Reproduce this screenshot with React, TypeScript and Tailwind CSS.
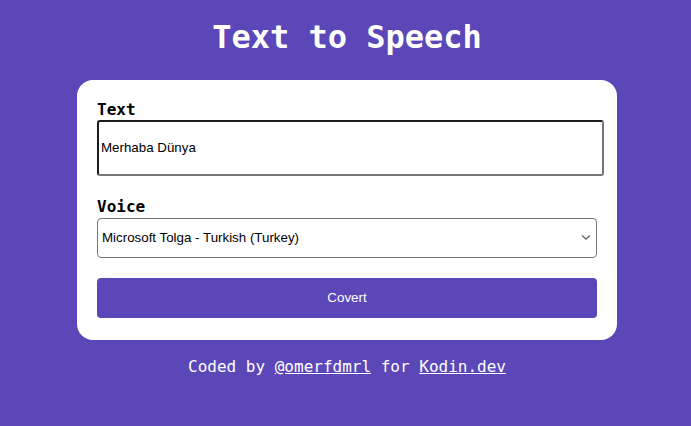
import { useState } from "react";

const mono = "font-['DejaVu_Sans_Mono',monospace]";

const App = () => {
  const [text, setText] = useState("Merhaba Dünya");
  const [voice, setVoice] = useState("tolga");

  return (
    <div className="flex min-h-screen w-full flex-col items-center bg-[#5c47b8] pt-[17px] pl-[3px] text-white">
      <h1 className={`${mono} text-[32px] font-bold leading-[40px]`}>
        Text to Speech
      </h1>

      <div className="mt-[23px] flex w-[540px] flex-col rounded-2xl bg-white px-5 pt-5 pb-[22px] text-black">
        <label className={`${mono} text-base font-bold leading-5`}>Text</label>
        <textarea
          value={text}
          onChange={(e) => setText(e.target.value)}
          className="h-[56px] w-[507px] resize-none rounded-[3px] border-2 border-t-[#1b1b1b] border-l-[#1b1b1b] border-r-[#767676] border-b-[#767676] px-[2px] pt-[18px] font-['Liberation_Sans',Arial,sans-serif] text-[13.33px] leading-[16px] text-black outline-none"
        />

        <label className={`${mono} mt-[21px] text-base font-bold leading-5`}>
          Voice
        </label>
        <div className="relative mt-px">
          <select
            value={voice}
            onChange={(e) => setVoice(e.target.value)}
            className="h-10 w-full appearance-none rounded-[4px] border border-[#767676] bg-white px-1 font-['Liberation_Sans',Arial,sans-serif] text-[13.33px] text-black outline-none"
          >
            <option value="tolga">Microsoft Tolga - Turkish (Turkey)</option>
          </select>
          <svg
            className="pointer-events-none absolute right-[6px] top-[16px]"
            width="10"
            height="7"
            viewBox="0 0 10 7"
            fill="none"
            stroke="#6b6b6b"
            strokeWidth="1.4"
          >
            <path d="M1 1.5 L5 5 L9 1.5" />
          </svg>
        </div>

        <button className="mt-5 h-10 w-full rounded-[4px] bg-[#5c47b8] font-['Liberation_Sans',Arial,sans-serif] text-[13.33px] text-white">
          Covert
        </button>
      </div>

      <p className={`${mono} mt-[15px] text-base leading-6`}>
        Coded by{" "}
        <a href="#" className="underline">
          @omerfdmrl
        </a>{" "}
        for{" "}
        <a href="#" className="underline">
          Kodin.dev
        </a>
      </p>
    </div>
  );
};

export default App;
